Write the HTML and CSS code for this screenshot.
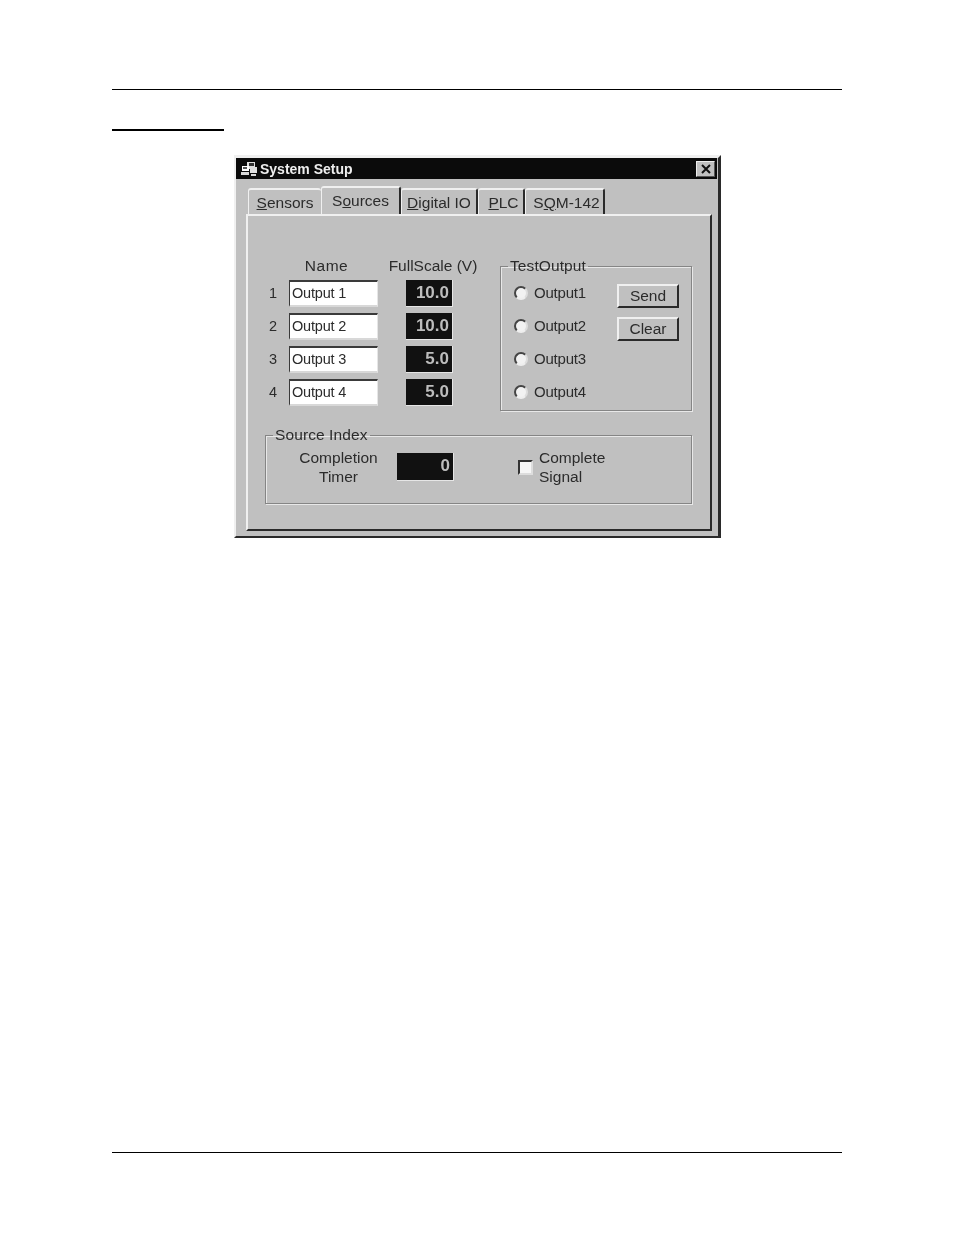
FILE: index.html
```html
<!DOCTYPE html>
<html lang="en">

<head>
	<meta charset="UTF-8">
	<title>System Setup</title>
	<link rel="stylesheet" href="styles.css">
</head>

<body>
	<div class="page">
		<div class="top-rule"></div>
		<div class="section-rule"></div>

		<div class="dialog">
			<div class="titlebar">
				<svg class="app-icon" width="16" height="16" viewBox="0 0 16 16">
					<path d="M6 1h8v5h2v6H9V8H6z" fill="#e0e0e0" />
					<path d="M8 2h5v3H8z" fill="#333" />
					<path d="M1 5h7v5H1z" fill="#fff" />
					<path d="M2 6h4v2H2z" fill="#555" />
					<path d="M0 11h8v3H0zM10 13h5v2h-5z" fill="#d8d8d8" />
				</svg>
				<span class="title-text">System Setup</span>
				<button class="close-button">
					<svg width="10" height="10" viewBox="0 0 10 10">
						<path d="M1 1l8 8M9 1l-8 8" stroke="#111" stroke-width="2" fill="none" />
					</svg>
				</button>
			</div>

			<div class="dialog-body">
				<div class="tabs">
					<div class="tab tab-sensors"><u>S</u>ensors</div>
					<div class="tab tab-active">S<u>o</u>urces</div>
					<div class="tab tab-digital"><u>D</u>igital IO</div>
					<div class="tab tab-plc"><u>P</u>LC</div>
					<div class="tab tab-sqm">S<u>Q</u>M-142</div>
				</div>

				<div class="panel">
					<div class="top-row">
						<div class="outputs">
							<div class="head-name">Name</div>
							<div class="head-scale">FullScale (V)</div>

							<div class="num">1</div>
							<div class="name-input">Output 1</div>
							<div class="led">10.0</div>

							<div class="num">2</div>
							<div class="name-input">Output 2</div>
							<div class="led">10.0</div>

							<div class="num">3</div>
							<div class="name-input">Output 3</div>
							<div class="led">5.0</div>

							<div class="num">4</div>
							<div class="name-input">Output 4</div>
							<div class="led">5.0</div>
						</div>

						<fieldset class="group test-output">
							<legend>TestOutput</legend>
							<div class="radios">
								<div class="radio-row"><span class="radio"></span>Output1</div>
								<div class="radio-row"><span class="radio"></span>Output2</div>
								<div class="radio-row"><span class="radio"></span>Output3</div>
								<div class="radio-row"><span class="radio"></span>Output4</div>
							</div>
							<div class="buttons">
								<button class="win-button">Send</button>
								<button class="win-button">Clear</button>
							</div>
						</fieldset>
					</div>

					<fieldset class="group source-index">
						<legend>Source Index</legend>
						<div class="timer-label">Completion<br>Timer</div>
						<div class="led led-timer">0</div>
						<span class="checkbox"></span>
						<div class="check-label">Complete<br>Signal</div>
					</fieldset>
				</div>
			</div>
		</div>

		<div class="bottom-rule"></div>
	</div>
</body>

</html>
```

FILE: styles.css
```css
*,
*::before,
*::after {
	margin: 0;
	padding: 0;
	box-sizing: border-box;

	--face-color: #c0c0c0;
	--text-color: #2b2b2b;
	--light-color: #f0f0f0;
	--dark-color: #2a2a2a;
	--etch-color: #858585;
}

body {
	background-color: #fff;
	font-family: "Liberation Sans", Arial, sans-serif;
	font-size: 15px;
	color: var(--text-color);
}

.page {
	height: 100vh;
	padding: 89px 112px 82px;

	display: flex;
	flex-direction: column;
}

.top-rule {
	height: 1px;
	background-color: #000;
}

.section-rule {
	width: 112px;
	height: 2px;
	margin-top: 39px;
	background-color: #000;
}

.bottom-rule {
	height: 1px;
	margin-top: auto;
	background-color: #000;
}

/* dialog window */
.dialog {
	width: 487px;
	height: 383px;
	margin: 24px 0 0 122px;

	display: flex;
	flex-direction: column;

	border-style: solid;
	border-width: 3px 3px 2px 2px;
	border-color: var(--light-color) var(--dark-color) var(--dark-color) var(--light-color);
	background-color: var(--face-color);

	/* the original is a scan, its edges are soft */
	filter: blur(0.35px);
}

.titlebar {
	height: 21px;
	margin-right: 1px;
	padding: 0 2px 0 5px;

	display: flex;
	align-items: center;

	background-color: #0b0b0b;
	color: #eee;
}

.app-icon {
	flex-shrink: 0;
}

.title-text {
	margin-left: 3px;
	font-size: 14px;
	font-weight: bold;
}

.close-button {
	width: 19px;
	height: 16px;
	margin-left: auto;

	display: flex;
	justify-content: center;
	align-items: center;

	border: 1px solid;
	border-color: #eee #555 #555 #eee;
	background-color: var(--face-color);
}

.dialog-body {
	flex: 1;
	padding: 7px 6px 5px 10px;

	display: flex;
	flex-direction: column;
}

/* tabs */
.tabs {
	height: 28px;
	padding-left: 2px;

	display: flex;
	align-items: flex-end;
}

.tab {
	height: 26px;
	padding-top: 4px;

	text-align: center;
	font-size: 15.5px;
	white-space: nowrap;

	border-style: solid;
	border-width: 2px 2px 0 1px;
	border-color: var(--light-color) var(--dark-color) var(--light-color) var(--light-color);
	border-radius: 3px 3px 0 0;
}

.tab-sensors {
	width: 73px;
	border-right: 0;
}

.tab-active {
	width: 80px;
	height: 30px;
	margin-bottom: -2px;
	padding-top: 4px;
	background-color: var(--face-color);
}

.tab-digital {
	width: 77px;
}

.tab-plc {
	width: 47px;
	padding-left: 5px;
}

.tab-sqm {
	width: 80px;
	padding-left: 4px;
}

.panel {
	flex: 1;
	padding: 41px 18px 0 17px;

	border-style: solid;
	border-width: 2px;
	border-color: var(--light-color) var(--dark-color) var(--dark-color) var(--light-color);
}

.top-row {
	display: flex;
	justify-content: space-between;
}

/* name / full scale table */
.outputs {
	align-self: flex-start;

	display: grid;
	grid-template-columns: 24px 89px 75px;
	grid-template-rows: 17px repeat(4, 27px);
	row-gap: 6px;
}

.head-name {
	grid-column: 2;
	padding-right: 14px;
	text-align: center;
	font-size: 15.5px;
	letter-spacing: 0.5px;
	line-height: 17px;
}

.head-scale {
	grid-column: 3;
	justify-self: center;
	margin-left: 35px;
	white-space: nowrap;
	font-size: 15.5px;
	line-height: 17px;
}

.num {
	padding-left: 4px;
	line-height: 27px;
	font-size: 14.5px;
}

.name-input {
	padding-left: 2px;

	line-height: 22px;
	font-size: 14.5px;
	letter-spacing: -0.2px;

	border-style: solid;
	border-width: 2px 1px 2px 1px;
	border-color: #3a3a3a #e6e6e6 #d8d8d8 #3a3a3a;
	background-color: #fff;
}

.led {
	margin-left: 28px;
	padding-right: 3px;

	text-align: right;
	line-height: 26px;
	font-size: 17px;
	font-weight: bold;
	color: #bdbdbd;

	border-right: 1px solid #e6e6e6;
	border-bottom: 1px solid #e6e6e6;
	background-color: #111;
}

/* etched groups */
.group {
	border: 1px solid var(--etch-color);
	box-shadow: 1px 1px 0 #e8e8e8, inset 1px 1px 0 #e8e8e8;
}

.group legend {
	margin-left: 7px;
	padding: 0 2px;
	font-size: 15.5px;
	letter-spacing: 0.1px;
	line-height: 18px;
}

.test-output {
	width: 192px;
	height: 154px;
	padding-top: 1px;

	display: flex;
	justify-content: space-between;
}

.radios {
	margin-left: 13px;

	display: flex;
	flex-direction: column;
}

.radio-row {
	height: 33px;

	display: flex;
	align-items: center;
	gap: 6px;

	font-size: 15px;
	letter-spacing: -0.2px;
}

.radio {
	width: 14px;
	height: 14px;

	border: 2px solid;
	border-color: #444 #ddd #eee #444;
	border-radius: 50%;
	background-color: #f2f2f2;
}

.buttons {
	margin-right: 12px;
	padding-top: 8px;

	display: flex;
	flex-direction: column;
	gap: 9px;
}

.win-button {
	width: 62px;
	height: 24px;

	font-family: "Liberation Sans", Arial, sans-serif;
	font-size: 15.5px;
	color: var(--text-color);

	border: 2px solid;
	border-color: #f0f0f0 #2a2a2a #2a2a2a #f0f0f0;
	background-color: var(--face-color);
}

.source-index {
	height: 78px;
	margin-top: 15px;
	padding-top: 4px;

	display: flex;
	align-items: flex-start;
}

.timer-label {
	width: 81px;
	margin-left: 32px;
	text-align: center;
	font-size: 15.5px;
	line-height: 19px;
}

.led-timer {
	width: 57px;
	height: 28px;
	margin: 5px 0 0 18px;
}

.checkbox {
	width: 15px;
	height: 15px;
	margin: 12px 6px 0 64px;

	border: 2px solid;
	border-color: #333 #ddd #ddd #333;
	background-color: #f6f6f6;
}

.check-label {
	font-size: 15.5px;
	line-height: 19px;
}
```
